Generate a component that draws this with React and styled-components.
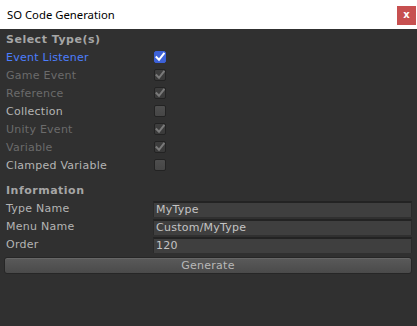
import React from "react";
import styled, { createGlobalStyle } from "styled-components";

const Global = createGlobalStyle`
  html, body { margin: 0; padding: 0; background: #303030; }
  body { font-family: "DejaVu Sans", Verdana, sans-serif; }
`;

const Window = styled.div`
  width: 417px;
  height: 326px;
  display: flex;
  flex-direction: column;
  background: #303030;
  overflow: hidden;
`;

const TitleBar = styled.div`
  height: 29px;
  flex: none;
  background: #ffffff;
  display: flex;
  align-items: center;
  justify-content: space-between;
  padding: 0 1px 0 7px;
`;

const Title = styled.span`
  font-family: "Noto Sans", "Open Sans", sans-serif;
  font-size: 11.3px;
  color: #000;
  margin-top: -1px;
`;

const Close = styled.div`
  width: 19px;
  height: 19px;
  background: #c75050;
  color: #fff;
  font-family: "DejaVu Sans", sans-serif;
  font-weight: bold;
  font-size: 10px;
  display: flex;
  align-items: center;
  justify-content: center;
  line-height: 1;
  padding-bottom: 1px;
  box-sizing: border-box;
  margin-top: 1px;
`;

const Body = styled.div`
  flex: 1;
  padding: 1px 5px 0 4px;
  display: flex;
  flex-direction: column;
  font-size: 11px;
`;

const Header = styled.div`
  height: 18px;
  display: flex;
  align-items: center;
  padding-left: 2px;
  font-weight: bold;
  letter-spacing: 0.5px;
  color: #a6a6a6;
  margin-top: ${(p) => p.$gap || 0}px;
`;

const Row = styled.div`
  height: 18px;
  display: grid;
  grid-template-columns: 149px 1fr;
  align-items: center;
`;

const Label = styled.span`
  padding-left: 2px;
  color: ${(p) => (p.$focus ? "#4c7efe" : p.$disabled ? "#6b6b6b" : "#b4b4b4")};
  letter-spacing: 0.25px;
`;

const Box = styled.div`
  width: 12px;
  height: 12px;
  margin-left: 1px;
  box-sizing: border-box;
  border-radius: 2px;
  display: flex;
  align-items: center;
  justify-content: center;
  border: 1px solid ${(p) => (p.$focus ? "#3a5fd8" : "#232323")};
  background: ${(p) =>
    p.$focus
      ? "#3e62d6"
      : p.$disabled
      ? "linear-gradient(#3e3e3e, #3a3a3a)"
      : "linear-gradient(#4e4e4e, #464646)"};
`;

const Field = styled.div`
  height: 16px;
  box-sizing: border-box;
  background: #3f3f3f;
  border-top: 2px solid #232323;
  border-left: 1px solid #2a2a2a;
  border-right: 1px solid #2a2a2a;
  display: flex;
  align-items: center;
  padding-left: 2px;
  color: #c4c4c4;
  letter-spacing: 0.25px;
  margin-top: 1px;
`;

const Button = styled.div`
  margin-top: 4px;
  height: 17px;
  box-sizing: border-box;
  border: 1px solid #262626;
  border-radius: 3px;
  background: linear-gradient(#5a5a5a, #4a4a4a);
  box-shadow: inset 0 1px 0 #666;
  color: #b8b8b8;
  display: flex;
  align-items: center;
  justify-content: center;
  letter-spacing: 0.25px;
`;

const Check = ({ color }) => (
  <svg width="10" height="10" viewBox="0 0 10 10">
    <path
      d="M1.5 5.2 L4 7.8 L8.8 1.6"
      fill="none"
      stroke={color}
      strokeWidth="2"
      strokeLinecap="square"
      strokeLinejoin="miter"
    />
  </svg>
);

const types = [
  { name: "Event Listener", checked: true, focus: true },
  { name: "Game Event", checked: true, disabled: true },
  { name: "Reference", checked: true, disabled: true },
  { name: "Collection", checked: false },
  { name: "Unity Event", checked: true, disabled: true },
  { name: "Variable", checked: true, disabled: true },
  { name: "Clamped Variable", checked: false },
];

const fields = [
  { name: "Type Name", value: "MyType" },
  { name: "Menu Name", value: "Custom/MyType" },
  { name: "Order", value: "120" },
];

export default function App() {
  return (
    <Window>
      <Global />
      <TitleBar>
        <Title>SO Code Generation</Title>
        <Close>x</Close>
      </TitleBar>
      <Body>
        <Header>Select Type(s)</Header>
        {types.map((t) => (
          <Row key={t.name}>
            <Label $focus={t.focus} $disabled={t.disabled}>
              {t.name}
            </Label>
            <Box $focus={t.focus} $disabled={t.disabled}>
              {t.checked && <Check color={t.focus ? "#ffffff" : "#7a7a7a"} />}
            </Box>
          </Row>
        ))}
        <Header $gap={7}>Information</Header>
        {fields.map((f) => (
          <Row key={f.name}>
            <Label>{f.name}</Label>
            <Field>{f.value}</Field>
          </Row>
        ))}
        <Button>Generate</Button>
      </Body>
    </Window>
  );
}
